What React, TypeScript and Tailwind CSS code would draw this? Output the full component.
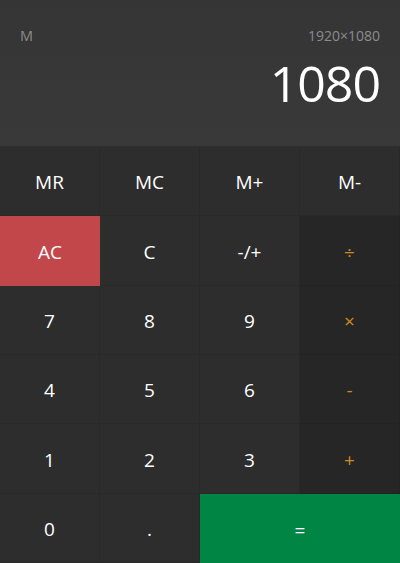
const keys: { label: string; kind?: 'mem' | 'op' | 'ac' | 'eq' }[] = [
  { label: 'MR', kind: 'mem' },
  { label: 'MC', kind: 'mem' },
  { label: 'M+', kind: 'mem' },
  { label: 'M-', kind: 'mem' },
  { label: 'AC', kind: 'ac' },
  { label: 'C' },
  { label: '-/+' },
  { label: '÷', kind: 'op' },
  { label: '7' },
  { label: '8' },
  { label: '9' },
  { label: '×', kind: 'op' },
  { label: '4' },
  { label: '5' },
  { label: '6' },
  { label: '-', kind: 'op' },
  { label: '1' },
  { label: '2' },
  { label: '3' },
  { label: '+', kind: 'op' },
  { label: '0' },
  { label: '.' },
  { label: '=', kind: 'eq' },
];

function keyClass(kind?: string) {
  switch (kind) {
    case 'ac':
      return 'bg-[#c1474a] text-white';
    case 'eq':
      return 'col-span-2 bg-[#008545] text-white';
    case 'op':
      return 'bg-[#262626] text-[#cc8a1e] border-r border-b border-[#232323]';
    default:
      return 'bg-[#2d2d2d] text-white border-r border-b border-[#292929]';
  }
}

export default function App() {
  return (
    <div className="flex h-[563px] w-[400px] flex-col bg-[#2d2d2d] font-['Open_Sans','Noto_Sans',sans-serif]">
      <div className="flex h-[147px] flex-col border-b border-[#2f2f2f] bg-gradient-to-b from-[#353535] to-[#393939] px-5 pt-[26px]">
        <div className="flex items-center justify-between text-[14px] leading-[20px] text-[#8c8c8c]">
          <span className="text-[14.5px]">M</span>
          <span>1920×1080</span>
        </div>
        <div className="mt-[12px] text-right text-[50px] leading-none tracking-[-1px] text-white">1080</div>
      </div>

      <div className="grid flex-1 grid-cols-4 grid-rows-6">
        {keys.map((k) => (
          <button
            key={k.label}
            className={`flex items-center justify-center pt-[3px] text-[19px] ${keyClass(k.kind)}`}
          >
            {k.label}
          </button>
        ))}
      </div>
    </div>
  );
}
